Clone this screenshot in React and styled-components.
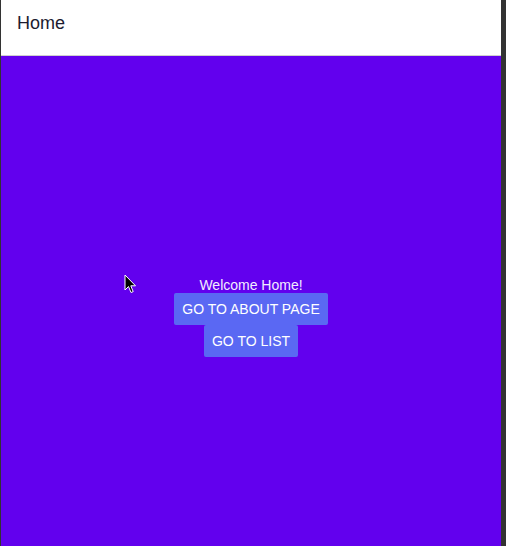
import React from 'react'
import styled, {createGlobalStyle} from 'styled-components'

const GlobalStyle = createGlobalStyle`
  html, body {
    margin: 0;
    padding: 0;
    height: 100%;
    background: #333;
  }
  #root {
    height: 100%;
  }
`

const Frame = styled.div`
  position: relative;
  display: flex;
  flex-direction: column;
  height: 546px;
  margin-left: 1px;
  margin-right: 5px;
  font-family: "Liberation Sans", Arial, sans-serif;
`

const Header = styled.header`
  height: 56px;
  box-sizing: border-box;
  flex: none;
  display: flex;
  align-items: center;
  padding: 0 0 8px 16px;
  background: #fff;
  border-bottom: 1px solid #cfcfcf;
  color: #1c1c30;
  font-size: 18px;
`

const Main = styled.main`
  flex: 1;
  background: #6200ee;
  display: flex;
  flex-direction: column;
  align-items: center;
  padding-top: 221px;
`

const Welcome = styled.div`
  color: #f2ecff;
  font-size: 14px;
  line-height: 16px;
`

const Button = styled.button`
  border: none;
  border-radius: 2px;
  background: #5a68f3;
  color: #fff;
  font-family: inherit;
  font-size: 14px;
  line-height: 16px;
  padding: 8px 8px;
  text-transform: uppercase;
  cursor: pointer;
`

const Cursor = styled.svg`
  position: absolute;
  left: 123px;
  top: 274px;
  pointer-events: none;
`

const Pointer = () => (
  <Cursor width="14" height="22" viewBox="0 0 14 22">
    <path d="M1 1 L1 16 L4.5 12.5 L7 18.5 L9.2 17.6 L6.8 11.8 L11.5 11.8 Z"
      fill="#000" stroke="#fff" strokeWidth="1" strokeLinejoin="round"/>
  </Cursor>
)

export default function App() {
  return (
    <>
      <GlobalStyle/>
      <Frame>
        <Header>Home</Header>
        <Main>
          <Welcome>Welcome Home!</Welcome>
          <Button>Go to about page</Button>
          <Button>Go to list</Button>
        </Main>
        <Pointer/>
      </Frame>
    </>
  )
}
